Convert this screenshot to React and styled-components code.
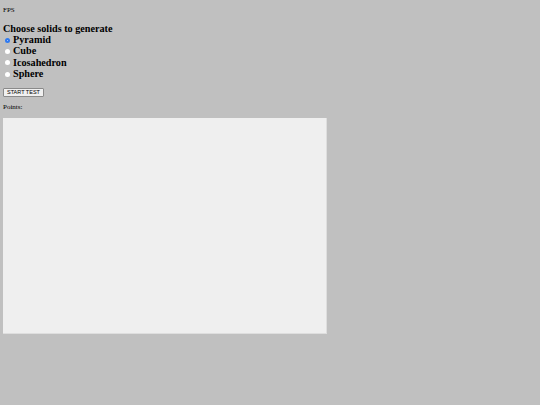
import styled, { createGlobalStyle } from "styled-components";
import { useState } from "react";

const GlobalStyle = createGlobalStyle`
  html, body {
    margin: 0;
    padding: 0;
    background: #c0c0c0;
  }
  body {
    font-family: "Liberation Serif", "Times New Roman", serif;
    color: #000;
  }
`;

const SOLIDS = ["Pyramid", "Cube", "Icosahedron", "Sphere"];

function App() {
  const [solid, setSolid] = useState("Pyramid");
  return (
    <Page>
      <GlobalStyle />
      <Fps>FPS</Fps>
      <Title>Choose solids to generate</Title>
      <Options>
        {SOLIDS.map((name) => (
          <Option key={name}>
            <Radio
              type="radio"
              name="solid"
              checked={solid === name}
              onChange={() => setSolid(name)}
            />
            {name}
          </Option>
        ))}
      </Options>
      <StartButton>START TEST</StartButton>
      <Points>Points:</Points>
      <Canvas />
    </Page>
  );
}

const Page = styled.div`
  display: flex;
  flex-direction: column;
  align-items: flex-start;
  padding: 3px;
`;

const Fps = styled.div`
  font-size: 7px;
  line-height: 8px;
  margin-top: 3px;
`;

const Title = styled.div`
  font-size: 10.2px;
  font-weight: bold;
  line-height: 11px;
  margin-top: 9px;
`;

const Options = styled.div`
  display: flex;
  flex-direction: column;
`;

const Option = styled.label`
  display: flex;
  align-items: center;
  gap: 3px;
  font-size: 10.2px;
  font-weight: bold;
  line-height: 11.3px;
`;

const Radio = styled.input`
  appearance: none;
  margin: 1px 0 0 2px;
  width: 5px;
  height: 5px;
  border-radius: 50%;
  background: #fff;
  box-sizing: border-box;
  &:checked {
    background: radial-gradient(circle, #9cc0ff 0 0.5px, #2f7af0 1px);
  }
`;

const StartButton = styled.button`
  margin-top: 9px;
  padding: 0 3px;
  height: 9px;
  font-family: "Liberation Sans", Arial, sans-serif;
  font-size: 5.5px;
  line-height: 7px;
  background: #f0f0f0;
  border: 1px solid #8a8a8a;
  border-radius: 1px;
  color: #000;
`;

const Points = styled.div`
  font-size: 7px;
  line-height: 8px;
  margin-top: 6px;
`;

const Canvas = styled.div`
  margin-top: 7px;
  width: 324px;
  height: 216px;
  background: #efefef;
  border-right: 1px solid #dedede;
  border-bottom: 1px solid #dedede;
  box-sizing: border-box;
`;

export default App;
